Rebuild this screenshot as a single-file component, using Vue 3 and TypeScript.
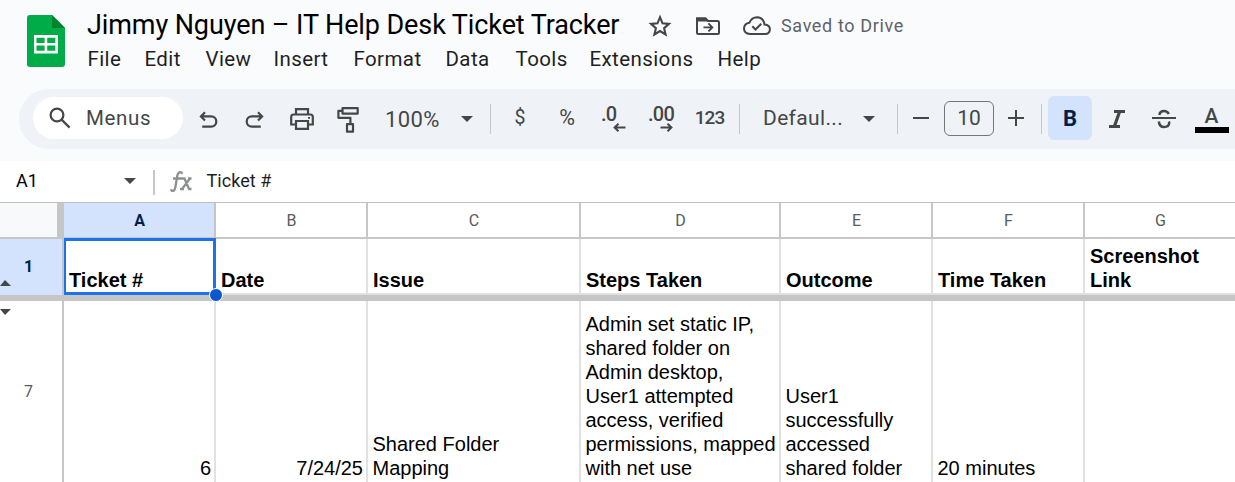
<script setup lang="ts">
interface MenuEntry { label: string; key: string }
interface Column { letter: string; title: string; value: string; right?: boolean }

const menus: MenuEntry[] = ['File', 'Edit', 'View', 'Insert', 'Format', 'Data', 'Tools', 'Extensions', 'Help']
  .map((label) => ({ label, key: label.toLowerCase() }))

const columns: Column[] = [
  { letter: 'A', title: 'Ticket #', value: '6', right: true },
  { letter: 'B', title: 'Date', value: '7/24/25', right: true },
  { letter: 'C', title: 'Issue', value: 'Shared Folder\nMapping' },
  { letter: 'D', title: 'Steps Taken', value: 'Admin set static IP,\nshared folder on\nAdmin desktop,\nUser1 attempted\naccess, verified\npermissions, mapped\nwith net use' },
  { letter: 'E', title: 'Outcome', value: 'User1\nsuccessfully\naccessed\nshared folder' },
  { letter: 'F', title: 'Time Taken', value: '20 minutes' },
  { letter: 'G', title: 'Screenshot\nLink', value: '' },
]
</script>

<template>
  <div class="app">
    <header class="top">
      <svg class="logo" width="38" height="52" viewBox="0 0 38 52">
        <path d="M3 0H25L38 13V49a3 3 0 0 1-3 3H3a3 3 0 0 1-3-3V3a3 3 0 0 1 3-3Z" fill="#00ac47" />
        <path d="M25 0 38 13H25Z" fill="#00832d" />
        <path fill-rule="evenodd" fill="#fff" d="M7 20H31V38.500H7ZM9.500 22.800V28H17.600V22.800ZM20.200 22.800V28H28.300V22.800ZM9.500 30.500V35.700H17.600V30.500ZM20.200 30.500V35.700H28.300V30.500Z" />
      </svg>
      <div class="head">
        <div class="title-row">
          <h1 class="title">Jimmy Nguyen – IT Help Desk Ticket Tracker</h1>
          <svg class="star" width="24" height="24" viewBox="0 0 24 24" fill="none" stroke="#444746" stroke-width="2.100">
            <path d="M12 3.200 14.500 9.300 21 9.900 16.100 14.200 17.600 20.500 12 17.100 6.400 20.500 7.900 14.200 3 9.900 9.500 9.300Z" />
          </svg>
          <svg class="move" width="24" height="18" viewBox="0 0 24 18">
            <path d="M1 1.200H9.500L12 4H21.500Q23 4 23 5.500V15.500Q23 17 21.500 17H2.500Q1 17 1 15.500Z" fill="none" stroke="#444746" stroke-width="2" />
            <path d="M1 1H9.500L12 4.500H1Z" fill="#444746" />
            <path d="M7.500 10.400H16M12.400 6.400 16.300 10.400 12.400 14.400" fill="none" stroke="#444746" stroke-width="1.900" />
          </svg>
          <svg class="cloud" width="28" height="20" viewBox="0 0 28 20" fill="none" stroke="#444746" stroke-width="2">
            <path d="M7 18Q1 17.800 1 12.300Q1.400 7.500 6.300 6.800Q8.800 1.200 14 1.200Q20.600 1.500 21.500 8.500Q26.900 9 26.900 13.200Q26.700 18 22 18Z" />
            <path d="M9.300 10.300 12.500 13.500 18.300 7.700" />
          </svg>
          <span class="saved">Saved to Drive</span>
        </div>
        <nav class="menus">
          <span v-for="m in menus" :key="m.key" :class="['menu', m.key]">{{ m.label }}</span>
        </nav>
      </div>
    </header>

    <div class="toolbar">
      <div class="pill">
        <svg width="22" height="22" viewBox="0 0 22 22" fill="none" stroke="#444746" stroke-width="2.200">
          <circle cx="8" cy="8" r="6.400" /><path d="M12.600 12.600 20.600 20.600" />
        </svg>
        <span>Menus</span>
      </div>
      <div class="tool low">
        <svg width="19" height="18" viewBox="0 0 19 18" fill="none" stroke="#444746" stroke-width="2.200">
          <path d="M6 1.200 1.900 5.400 6 9.600M2 5.400H12.200A5 5 0 0 1 12.200 15.600H3.200" />
        </svg>
      </div>
      <div class="tool low">
        <svg width="19" height="18" viewBox="0 0 19 18" fill="none" stroke="#444746" stroke-width="2.200">
          <path d="M13 1.200 17.100 5.400 13 9.600M17 5.400H6.800A5 5 0 0 0 6.800 15.600H15.800" />
        </svg>
      </div>
      <div class="tool">
        <svg width="24" height="22" viewBox="0 0 24 22" fill="none" stroke="#444746" stroke-width="2.200">
          <path d="M6 6V1.200H18V6M6 16.500H1.200V9Q1.200 6.500 3.700 6.500H20.300Q22.800 6.500 22.800 9V16.500H18" />
          <path d="M6 13H18V20.800H6Z" /><path d="M18 9.900H20" stroke-width="1.800" />
        </svg>
      </div>
      <div class="tool paint">
        <svg width="22" height="26" viewBox="0 0 22 26" fill="none" stroke="#444746" stroke-width="2.200">
          <path d="M5.500 1.200H20.700V6.600H5.500ZM5.500 3.800H1.400V10.800H13.400V17M10 17.200H16V24.700H10Z" stroke-linejoin="round" />
        </svg>
      </div>
      <div class="tool text zoom"><span>100%</span></div>
      <div class="tool"><i class="caret"></i></div>
      <div class="tool"><i class="sep"></i></div>
      <div class="tool text money">$</div>
      <div class="tool text percent">%</div>
      <div class="tool decimal">
        <span>.0</span>
        <svg width="13" height="9" viewBox="0 0 13 9" fill="none" stroke="#444746" stroke-width="2"><path d="M5.500.8 1.600 4.500 5.500 8.200M1.600 4.500H12.500" /></svg>
      </div>
      <div class="tool decimal more">
        <span>.00</span>
        <svg width="13" height="9" viewBox="0 0 13 9" fill="none" stroke="#444746" stroke-width="2"><path d="M7.500.8 11.400 4.500 7.500 8.200M11.400 4.500H.5" /></svg>
      </div>
      <div class="tool text digits">123</div>
      <div class="tool"><i class="sep"></i></div>
      <div class="tool text font"><span>Defaul...</span></div>
      <div class="tool"><i class="caret"></i></div>
      <div class="tool"></div>
      <div class="tool"><i class="sep"></i></div>
      <div class="tool step"><svg width="16" height="16" viewBox="0 0 16 16" stroke="#444746" stroke-width="2"><path d="M0 8H16" /></svg></div>
      <div class="tool"><span class="size">10</span></div>
      <div class="tool step"><svg width="16" height="16" viewBox="0 0 16 16" stroke="#444746" stroke-width="2"><path d="M0 8H16M8 0V16" /></svg></div>
      <div class="tool"><i class="sep"></i></div>
      <div class="tool bold">B</div>
      <div class="tool italic">
        <svg width="16" height="18" viewBox="0 0 16 18" fill="none" stroke="#444746"><path d="M5 1.500H16M0 16.500H11" stroke-width="3" /><path d="M10.500 2 5.500 16" stroke-width="3.200" /></svg>
      </div>
      <div class="tool italic">
        <svg width="24" height="20" viewBox="0 0 24 20" fill="none" stroke="#444746">
          <path d="M0 9H24" stroke-width="2" />
          <path d="M7.300 6Q8 2 12 2Q15.300 2 16.800 5M6.800 12.500Q7.500 18 12 18Q17 18 17.200 14Q17.200 13.200 16.900 12.500" stroke-width="2.500" />
        </svg>
      </div>
      <div class="tool color"><span>A</span><i></i></div>
    </div>

    <div class="formula">
      <span class="name">A1</span>
      <i class="caret"></i>
      <i class="divider"></i>
      <svg class="fx" width="22" height="22" viewBox="0 0 22 22" fill="none" stroke="#8f9190" stroke-width="2.300">
        <path d="M1 18.300Q1.500 20.300 3.300 19.800Q4.800 19.300 5.300 16.500L7.300 4.800Q8 1.200 10.400 1.200Q12 1.300 11.800 3" />
        <path d="M3 7.500H12M11.500 7.500H14.500L19 18H21.500M10 18H14M18 7.500H21.500M12.500 17.500 19.500 8" />
      </svg>
      <span class="content">Ticket #</span>
    </div>

    <main class="sheet">
      <div class="row letters">
        <div class="corner"></div>
        <div v-for="c in columns" :key="c.letter" :class="['letter', { active: c.letter === 'A' }]">{{ c.letter }}</div>
      </div>
      <div class="row frozen">
        <div class="number active">1<i class="up"></i></div>
        <div v-for="c in columns" :key="c.letter" class="cell heading">{{ c.title }}</div>
        <div class="selection"><i class="handle"></i></div>
      </div>
      <div class="freeze"></div>
      <div class="row body">
        <div class="number">7<i class="down"></i></div>
        <div v-for="c in columns" :key="c.letter" :class="['cell', { right: c.right }]">{{ c.value }}</div>
      </div>
    </main>
  </div>
</template>

<style>
body { margin: 0; overflow: hidden; }
</style>

<style scoped>
* { box-sizing: border-box; }
svg { display: block; flex: none; }
.app {
  width: 1235px; height: 482px; overflow: hidden; background: #f9fbfd;
  font-family: Roboto, "Open Sans", sans-serif; color: #1f1f1f;
}
.top { display: flex; height: 89px; }
.logo { margin: 15px 0 0 27px; }
.head { margin-left: 22px; }
.title-row { display: flex; height: 44px; padding-top: 8px; }
.title { width: 548px; margin: 0; font-size: 27px; line-height: 34px; font-weight: 400; letter-spacing: -0.1px; white-space: nowrap; color: #000; margin-right: 13px; }
.star { margin: 6px 0 0 0; }
.move { margin: 9px 0 0 24px; }
.cloud { margin: 8px 0 0 23px; }
.saved { margin-left: 10px; font-size: 18px; line-height: 35px; letter-spacing: 0.64px; color: #5f6368; white-space: nowrap; }
.menus { display: flex; height: 30px; padding-left: 0.500px; line-height: 30px; font-size: 20.500px; letter-spacing: 0.4px; }
.menu { flex: none; }
.file { width: 57px; } .edit { width: 61px; } .view { width: 68px; } .insert { width: 80px; }
.format { width: 92px; } .data { width: 70px; } .tools { width: 74px; } .extensions { width: 128px; }
.toolbar {
  display: grid; width: 1240px; height: 60px; margin-left: 19px; padding-left: 14px;
  border-radius: 30px 0 0 30px; background: #eff3f8; color: #444746;
  grid-template-columns: 150px 50px 42px 53px 40px 80px 37px 11px 48px 46px 48px 46px 51px 9px 113px 23px 14px 7px 40px 56px 38px 13px 44px 50px 44px 52px;
}
.pill { display: flex; align-items: center; height: 42px; margin-top: 8px; padding-left: 16px; border-radius: 21px; background: #fff; font-size: 20.500px; letter-spacing: 0.65px; }
.pill span { margin-left: 15px; }
.tool { display: flex; align-items: center; justify-content: center; height: 60px; padding-bottom: 1px; }
.low { padding-top: 3px; }
.paint { padding-top: 2px; }
.step { padding-bottom: 2px; }
.text { font-size: 20px; }
.zoom { justify-content: flex-start; padding: 1px 0 0 17px; font-size: 22px; letter-spacing: 0.4px; }
.money, .digits { font-size: 19.500px; padding-bottom: 3px; }
.digits { font-size: 19px; letter-spacing: -0.8px; font-weight: 500; letter-spacing: -1px; }
.percent { font-size: 21.500px; padding-bottom: 3px; }
.font { justify-content: flex-start; padding: 0 0 3px 19px; font-size: 21px; letter-spacing: 0.35px; }
.caret { width: 0; height: 0; border: 6px solid transparent; border-top-color: #444746; border-bottom: 0; }
.sep { width: 1px; height: 30px; background: #c7c7c7; }
.decimal { flex-direction: column; align-items: flex-start; justify-content: flex-start; padding: 14px 0 0 11px; font-size: 20px; font-weight: 500; letter-spacing: -0.7px; line-height: 23px; }
.decimal svg { margin: -3px 0 0 12px; }
.more { padding-left: 10px; }
.size { width: 50px; height: 35px; border: 1px solid #747775; border-radius: 6px; text-align: center; font-size: 21px; line-height: 33px; }
.bold { height: 44px; margin-top: 7px; border-radius: 6px; background: #d3e3fd; color: #041e49; font-size: 22px; font-weight: 700; padding: 1px 0 0; }
.italic { padding: 0 0 0; }
.color { flex-direction: column; justify-content: flex-start; padding: 16px 1px 0 0; font-size: 21px; font-weight: 500; line-height: 22px; }
.color i { width: 34px; height: 6px; background: #000; }
.formula { display: flex; align-items: center; height: 42px; margin-top: 12px; border-bottom: 1px solid #c0c0c0; background: #fff; font-size: 18px; }
.name { width: 108px; padding: 0 0 2px 16px; color: #000; }
.formula .caret { margin: 0 0 1px 15.500px; }
.divider { width: 2px; height: 25px; margin: 2px 0 0 17.500px; background: #c7c7c7; }
.fx { margin-left: 15px; }
.content { margin-left: 14.500px; padding-bottom: 2px; letter-spacing: 0.05px; }
.sheet { background: #fff; }
.row { position: relative; display: grid; grid-template-columns: 64px 152px 152px 213px 200px 152px 152px 152px; }
.letters { height: 36px; border-bottom: 2px solid #c6c6c6; }
.corner { border-right: 7px solid #c6c6c6; background: #f8f9fa; }
.letter, .number { display: flex; align-items: center; justify-content: center; border-right: 2px solid #c6c6c6; font-size: 16px; color: #575b5f; }
.letter { padding-left: 1px; }
.letter.active, .number.active { background: #d3e3fd; color: #041e49; font-weight: 700; }
.frozen { height: 56px; }
.number { position: relative; padding-right: 5px; }
.number.active { padding-bottom: 2px; }
.up, .down { position: absolute; left: 0; border: 6px solid transparent; border-left-width: 5px; }
.up { bottom: 9px; border-bottom-color: #444746; border-top: 0; }
.down { top: 8px; border-top-color: #444746; border-bottom: 0; }
.cell { display: flex; align-items: flex-end; border-right: 2px solid #e1e1e1; padding: 0 3px 1px 4.500px; font: 20px/24px "Liberation Sans", Arial, sans-serif; color: #000; white-space: pre; }
.heading { padding-left: 5px; font-weight: 700; border-bottom: 2px solid #e1e1e1; }
.right { justify-content: flex-end; }
.selection { position: absolute; z-index: 1; left: 64px; top: -1px; width: 152px; height: 57px; border: 3px solid #1a73e8; border-left-width: 2px; }
.handle { position: absolute; right: -10px; bottom: -10px; width: 14px; height: 14px; border: 1px solid #fff; border-radius: 50%; background: #0b57d0; }
.freeze { height: 6px; background: #c6c6c6; }
.body { height: 181px; }
.body .cell { padding-bottom: 2px; }
</style>
